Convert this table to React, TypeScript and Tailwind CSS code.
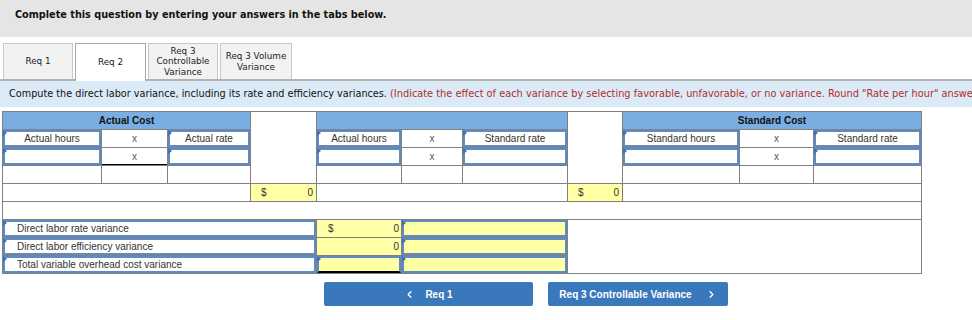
import { ChevronLeft, ChevronRight } from "lucide-react";

function Marker() {
  return (
    <span className="absolute -left-[2px] -top-[2px] w-0 h-0 border-y-[3px] border-y-transparent border-l-[4px] border-l-[#3573c4]" />
  );
}

function Field({ text, className = "" }: { text?: string; className?: string }) {
  return (
    <div
      className={`relative bg-white border-2 border-[#5f8bc4] flex items-center justify-center ${className}`}
    >
      <Marker />
      {text}
    </div>
  );
}

function Times({ className = "" }: { className?: string }) {
  return (
    <div className={`bg-white flex items-center justify-center text-[#555] ${className}`}>x</div>
  );
}

function Blank({ className = "" }: { className?: string }) {
  return <div className={`bg-white ${className}`} />;
}

function Money() {
  return (
    <div className="bg-[#ffffa6] flex items-center justify-between pl-[10px] pr-[3px]">
      <span>$</span>
      <span>0</span>
    </div>
  );
}

function Tab({ lines, active = false, width }: { lines: string[]; active?: boolean; width: string }) {
  return (
    <div
      className={`${width} flex flex-col items-center justify-center text-[8.8px] leading-[10.5px] text-[#222] ${
        active
          ? "h-[38px] -mb-[2px] bg-white border border-b-0 border-[#a9a9a9]"
          : "h-[36px] bg-[#f2f2f2] border border-b-0 border-[#c8c8c8]"
      }`}
    >
      {lines.map((l) => (
        <span key={l}>{l}</span>
      ))}
    </div>
  );
}

export default function App() {
  return (
    <div className="w-[972px] h-[320px] bg-white overflow-hidden font-['DejaVu_Sans',Verdana,sans-serif] text-[9.7px]">
      <div className="h-[37px] bg-[#e5e5e5] pl-[15px] pt-[9px] font-bold text-[#111] leading-[12px]">
        Complete this question by entering your answers in the tabs below.
      </div>

      <div className="mt-[6px] h-[38px] flex items-end gap-[2px] pl-[3px] border-b-2 border-[#b2b2b2]">
        <Tab lines={["Req 1"]} width="w-[70px]" />
        <Tab lines={["Req 2"]} width="w-[71px]" active />
        <Tab lines={["Req 3", "Controllable", "Variance"]} width="w-[70px]" />
        <Tab lines={["Req 3 Volume", "Variance"]} width="w-[72px]" />
      </div>

      <div className="h-[26px] bg-[#dbeaf7] pl-[9px] flex items-center whitespace-nowrap overflow-hidden text-[#111]">
        <span>Compute the direct labor variance, including its rate and efficiency variances.&nbsp;</span>
        <span className="text-[#b52a2a] text-[9.8px]">
          (Indicate the effect of each variance by selecting favorable, unfavorable, or no variance. Round "Rate per hour" answers to 2 decimal places.)
        </span>
      </div>

      <div className="mt-[4px] ml-[2px] w-[920px] grid grid-cols-[98px_65px_82px_65px_84px_60px_104px_54px_116px_73px_107px] grid-rows-[repeat(9,17px)] gap-px p-px bg-[#808080] font-['Liberation_Sans',Arial,sans-serif] text-[10px] text-[#333]">
        {/* header band */}
        <div className="col-span-3 bg-[#7aade2] flex items-center justify-center font-bold text-[#111]">
          Actual Cost
        </div>
        <Blank className="row-span-4" />
        <div className="col-span-3 bg-[#7aade2]" />
        <Blank className="row-span-4" />
        <div className="col-span-3 bg-[#7aade2] flex items-center justify-center font-bold text-[#111]">
          Standard Cost
        </div>

        {/* labels */}
        <Field text="Actual hours" />
        <Times />
        <Field text="Actual rate" />
        <Field text="Actual hours" />
        <Times />
        <Field text="Standard rate" />
        <Field text="Standard hours" />
        <Times />
        <Field text="Standard rate" />

        {/* entries */}
        <Field />
        <Times className="border-b border-black" />
        <Field />
        <Field />
        <Times />
        <Field />
        <Field />
        <Times />
        <Field />

        {/* spacer row */}
        <Blank />
        <Blank />
        <Blank />
        <Blank />
        <Blank />
        <Blank />
        <Blank />
        <Blank />
        <Blank />

        {/* totals */}
        <Blank className="col-span-3" />
        <Money />
        <Blank className="col-span-3" />
        <Money />
        <Blank className="col-span-3" />

        <Blank className="col-span-11" />

        {/* variances */}
        <div className="col-span-4 relative bg-white border-2 border-[#5f8bc4] flex items-center pl-[12px]">
          <Marker />
          Direct labor rate variance
        </div>
        <div className="bg-[#ffffa6] flex items-center justify-between pl-[11px] pr-[2px]">
          <span>$</span>
          <span>0</span>
        </div>
        <div className="col-span-2 relative bg-[#ffffa6] border-2 border-[#5f8bc4]">
          <Marker />
        </div>
        <Blank className="col-span-4 row-span-3" />

        <div className="col-span-4 relative bg-white border-2 border-[#5f8bc4] flex items-center pl-[12px]">
          <Marker />
          Direct labor efficiency variance
        </div>
        <div className="bg-[#ffffa6] flex items-center justify-end pr-[2px]">
          <span>0</span>
        </div>
        <div className="col-span-2 relative bg-[#ffffa6] border-2 border-[#5f8bc4]">
          <Marker />
        </div>

        <div className="col-span-4 relative bg-white border-2 border-[#5f8bc4] flex items-center pl-[12px]">
          <Marker />
          Total variable overhead cost variance
        </div>
        <div className="relative bg-[#ffffa6] border-2 border-[#5f8bc4] border-b-black">
          <Marker />
        </div>
        <div className="col-span-2 relative bg-[#ffffa6] border-2 border-[#5f8bc4]">
          <Marker />
        </div>
      </div>

      <div className="mt-[8px] pl-[324px] flex gap-[15px] font-['Liberation_Sans',Arial,sans-serif] text-[10px] font-bold text-white">
        <div className="w-[209px] h-[24px] rounded-[2px] bg-[#3a78bc] flex items-center justify-center gap-[10px]">
          <ChevronLeft size={11} strokeWidth={3} />
          <span>Req 1</span>
        </div>
        <div className="w-[180px] h-[24px] rounded-[2px] bg-[#3a78bc] flex items-center justify-center gap-[14px]">
          <span>Req 3 Controllable Variance</span>
          <ChevronRight size={11} strokeWidth={3} />
        </div>
      </div>
    </div>
  );
}
